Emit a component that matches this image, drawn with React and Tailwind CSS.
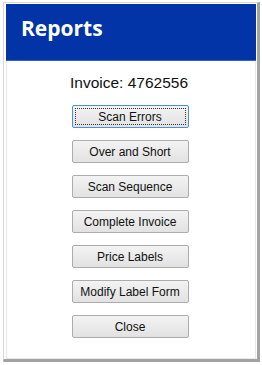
import React from "react";

const labels = [
  "Scan Errors",
  "Over and Short",
  "Scan Sequence",
  "Complete Invoice",
  "Price Labels",
  "Modify Label Form",
  "Close",
];

export default function App() {
  return (
    <div className="w-[262px] h-[365px] bg-white overflow-hidden">
      <div className="ml-[3px] mt-[2px] w-[257px] h-[360px] box-border border-l border-t border-l-[#d6d6d6] border-t-[#d6d6d6] border-r-[3px] border-b-[3px] border-r-[#a3a3a3] border-b-[#a3a3a3] pl-[2px] pt-[1px] pr-[1px] flex flex-col">
        <div className="h-[57px] bg-[#0234a8] border-b border-[#3a62c0] pl-[15px] pt-[10px] text-white font-bold text-[21px] leading-[28px]" style={{ fontFamily: '"Open Sans", "Noto Sans", sans-serif' }}>
          Reports
        </div>
        <div className="flex-1 flex flex-col items-center border-l border-r border-b border-[#e8e8e8]" style={{ fontFamily: '"Liberation Sans", Arial, sans-serif' }}>
          <div className="mt-[13px] text-[15.5px] leading-[18px] text-[#111] pr-[4px]">Invoice: 4762556</div>
          <div className="mt-[13px] flex flex-col gap-[12px] pr-[2px]">
            {labels.map((l, i) => (
              <button
                key={l}
                className={
                  "w-[117px] h-[23px] rounded-[2px] text-[12px] leading-none text-[#111] bg-gradient-to-b from-[#f3f3f3] to-[#e2e2e2] border " +
                  (i === 0 ? "border-[#4d8fd1] p-[2px]" : "border-[#acacac]")
                }
                style={{ fontFamily: '"Liberation Sans", Arial, sans-serif' }}
              >
                {i === 0 ? (
                  <span className="flex items-center justify-center w-full h-full border border-dotted border-[#333]">
                    {l}
                  </span>
                ) : (
                  l
                )}
              </button>
            ))}
          </div>
        </div>
      </div>
    </div>
  );
}
